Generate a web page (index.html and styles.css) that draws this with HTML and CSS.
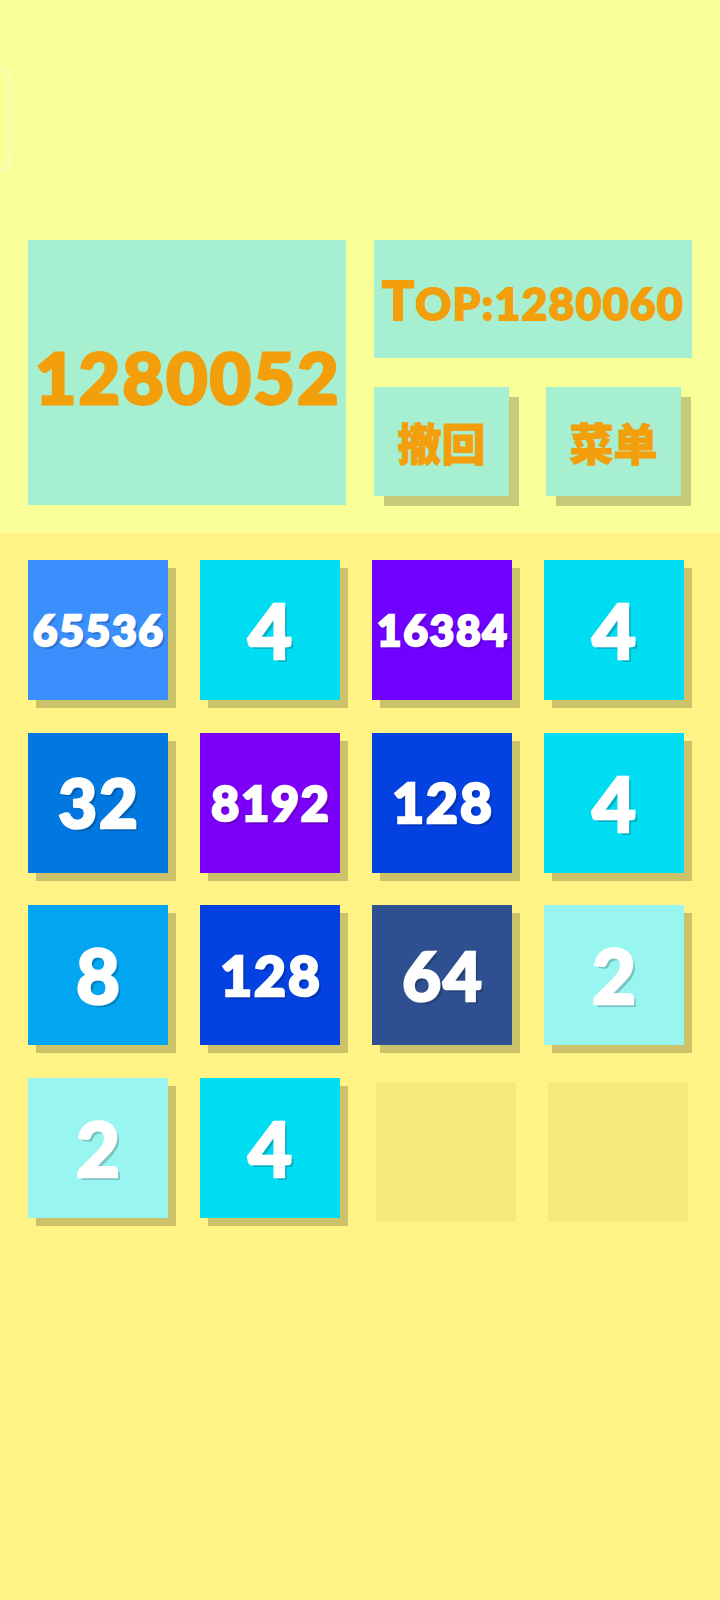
FILE: index.html
```html
<!DOCTYPE html>
<html lang="zh">
<head>
<meta charset="utf-8">
<title>2048</title>
<link rel="stylesheet" href="styles.css">
</head>
<body>
<div class="app">
  <div class="edge-glow"></div>
  <header class="header">
    <div class="score-box"><span class="score">1280052</span></div>
    <div class="side">
      <div class="top-box"><span class="top-text"><span class="top-t">T</span>OP:1280060</span></div>
      <div class="buttons">
        <div class="btn">撤回</div>
        <div class="btn">菜单</div>
      </div>
    </div>
  </header>
  <main class="board">
    <div class="tile t65536 d5">65536</div>
    <div class="tile t4 d1">4</div>
    <div class="tile t16384 d5">16384</div>
    <div class="tile t4 d1">4</div>

    <div class="tile t32 d2">32</div>
    <div class="tile t8192 d4">8192</div>
    <div class="tile t128 d3">128</div>
    <div class="tile t4 d1">4</div>

    <div class="tile t8 d1">8</div>
    <div class="tile t128 d3">128</div>
    <div class="tile t64 d2">64</div>
    <div class="tile t2 d1">2</div>

    <div class="tile t2 d1">2</div>
    <div class="tile t4 d1">4</div>
    <div class="cell"></div>
    <div class="cell"></div>
  </main>
</div>
</body>
</html>
```
FILE: styles.css
```css
html, body {
  margin: 0;
  padding: 0;
}
body {
  width: 720px;
  height: 1600px;
  background: #fff385;
  font-family: "Lato", "DejaVu Sans", sans-serif;
  overflow: hidden;
}
.app {
  position: relative;
  width: 720px;
  height: 1600px;
}
.edge-glow {
  position: absolute;
  left: -30px;
  top: 66px;
  width: 36px;
  height: 100px;
  border: 3px solid rgba(255, 255, 255, 0.35);
  border-radius: 14px;
  filter: blur(1.5px);
}
.header {
  box-sizing: border-box;
  height: 533px;
  background: #f8fe98;
  padding: 240px 0 0 28px;
  display: flex;
  gap: 28px;
}
.score-box {
  width: 318px;
  height: 265px;
  background: #a6efd0;
  display: flex;
  align-items: center;
  justify-content: center;
}
.score {
  color: #f29f0b;
  -webkit-text-stroke: 3px #f29f0b;
  font-weight: 900;
  font-size: 71px;
  letter-spacing: 2.5px;
  line-height: 1;
  padding-top: 8px;
  padding-left: 2px;
}
.side {
  width: 318px;
  display: flex;
  flex-direction: column;
  gap: 29px;
}
.top-box {
  height: 118px;
  background: #a6efd0;
  display: flex;
  align-items: center;
  justify-content: center;
}
.top-text {
  color: #f29f0b;
  -webkit-text-stroke: 2px #f29f0b;
  font-weight: 900;
  font-size: 44px;
  line-height: 1;
  letter-spacing: 1.5px;
}
.top-t {
  font-size: 53px;
}
.buttons {
  display: flex;
  gap: 37px;
}
.btn {
  width: 135px;
  height: 109px;
  background: #a6efd0;
  box-shadow: 10px 10px 0 rgba(0, 0, 0, 0.2);
  color: #f29f0b;
  -webkit-text-stroke: 1px #f29f0b;
  font-family: "Noto Sans CJK SC", sans-serif;
  font-weight: 900;
  font-size: 44px;
  display: flex;
  align-items: center;
  justify-content: center;
  line-height: 1;
}
.board {
  padding: 27px 0 0 28px;
  display: grid;
  grid-template-columns: repeat(4, 140px);
  grid-auto-rows: 140px;
  column-gap: 32px;
  row-gap: 32.5px;
}
.tile {
  box-shadow: 8px 8px 0 rgba(0, 0, 0, 0.2);
  color: #ffffff;
  -webkit-text-stroke: 2.5px #ffffff;
  font-weight: 900;
  display: flex;
  align-items: center;
  justify-content: center;
  line-height: 1;
  letter-spacing: 2px;
  text-indent: 2px;
  text-shadow: 3px 3px 0 rgba(0, 0, 0, 0.2);
}
.d1 { font-size: 76px; }
.d2 { font-size: 67px; }
.d3 { font-size: 55px; }
.d4 { font-size: 48px; }
.d5 { font-size: 42px; }
.cell {
  background: #f7e97c;
  transform: translate(4px, 4px);
}
.t2 { background: #98f5f0; }
.t4 { background: #00ddf2; }
.t8 { background: #02a6f0; }
.t32 { background: #0078e0; }
.t64 { background: #2f5090; }
.t128 { background: #0341e0; }
.t8192 { background: #7c00f7; }
.t16384 { background: #7000ff; }
.t65536 { background: #3a8ffc; }
```
